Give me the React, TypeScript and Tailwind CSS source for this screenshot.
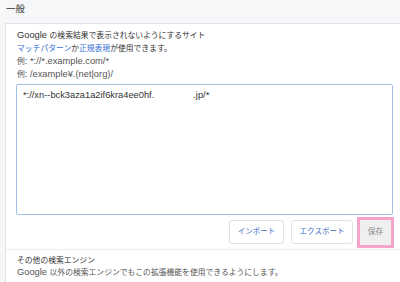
import React from "react";

const font = { fontFamily: '"Liberation Sans", "Noto Sans CJK JP", sans-serif' };

// Japanese runs are set a little smaller than the latin text, as in the source UI
const J = ({ children, className = "" }: { children: React.ReactNode; className?: string }) => (
  <span className={`text-[7.8px] ${className}`}>{children}</span>
);

export default function App() {
  return (
    <div className="w-[400px] h-[282px] overflow-hidden bg-[#f6f7f9] text-[#333]" style={font}>
      <div className="h-[23px] pl-[6px] pt-[2px] text-[9.5px] leading-[14px]">一般</div>
      <div className="ml-[5px] h-[259px] bg-white border-l border-t border-[#e3e5e9]">
        <div className="pl-[11px] pt-[5px] text-[9.3px] leading-[12px]">
          <div>
            Google <J>の検索結果で表示されないようにするサイト</J>
          </div>
          <div>
            <J className="text-[#2f6ed8]">マッチパターン</J>
            <J>か</J>
            <J className="text-[#2f6ed8]">正規表現</J>
            <J>が使用できます。</J>
          </div>
          <div className="text-[#555]">
            <J>例</J>: *://*.example.com/*
          </div>
          <div className="text-[#555]">
            <J>例</J>: /example¥.(net|org)/
          </div>
        </div>
        <div className="pl-[10px] pt-[3px]">
          <div className="w-[377px] h-[131px] border border-[#a2bfe6] rounded-[2px] pl-[6px] pt-[4px] text-[9.3px] leading-[12px] text-[#333]">
            *://xn--bck3aza1a2if6kra4ee0hf.<span className="inline-block w-[39px]" />.jp/*
          </div>
        </div>
        <div className="flex justify-end items-center h-[34px] pr-[6px]">
          <button className="w-[55px] h-[24px] border border-[#dfe1e5] rounded-[3px] bg-white text-[7.5px] text-[#3a6fc7]">
            インポート
          </button>
          <button className="ml-[7px] w-[62px] h-[24px] border border-[#dfe1e5] rounded-[3px] bg-white text-[7.5px] text-[#3a6fc7]">
            エクスポート
          </button>
          <div className="ml-[4px] w-[37px] h-[31px] border-[3px] border-[#f4a3c9] flex items-center justify-center">
            <button className="w-[31px] h-[25px] bg-[#efefef] text-[7.8px] text-[#888]">保存</button>
          </div>
        </div>
        <div className="border-t border-[#eceef1] pl-[11px] pt-[5px] text-[9.3px] leading-[11.5px]">
          <div>
            <J>その他の検索エンジン</J>
          </div>
          <div className="text-[#555]">
            Google <J>以外の検索エンジンでもこの拡張機能を使用できるようにします。</J>
          </div>
        </div>
      </div>
    </div>
  );
}
